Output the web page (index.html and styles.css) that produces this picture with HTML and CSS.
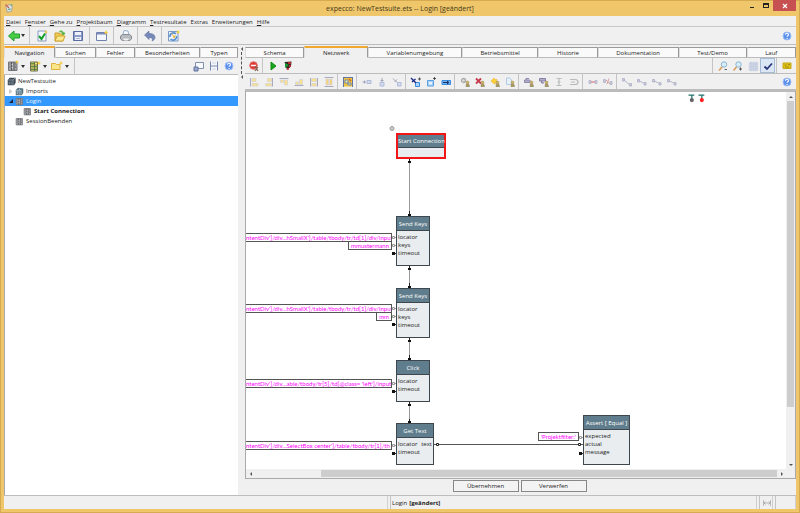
FILE: index.html
```html
<!DOCTYPE html>
<html lang="de">
<head>
<meta charset="utf-8">
<title>expecco: NewTestsuite.ets -- Login [geändert]</title>
<link rel="stylesheet" href="styles.css">
</head>
<body>
<svg class="defs" aria-hidden="true">
  <symbol id="app" viewBox="0 0 12 12"><path d="M2 3l5-1 3 2-1 6-5 1z" fill="#dfe5e4" stroke="#9a9f94"/><path d="M2 2l4 4" stroke="#d05a50" stroke-width="1.5"/><path d="M8 3l2-1M5 8l3-1" stroke="#5aa890" stroke-width="1.5"/></symbol>
  <symbol id="back" viewBox="0 0 12 12"><path d="M0.5 6L6 1v3h5.5v4H6v3z" fill="#45cf45" stroke="#249a2c"/></symbol>
  <symbol id="check" viewBox="0 0 12 12"><path d="M2 1h8v10H2z" fill="#f3f6fb" stroke="#8b9cc0"/><path d="M3 6l2.5 3L9 3.5" fill="none" stroke="#12a028" stroke-width="2"/><path d="M10 0l.6 1.4L12 2l-1.4.6L10 4l-.6-1.4L8 2l1.400-.6z" fill="#f5c832"/></symbol>
  <symbol id="open" viewBox="0 0 12 12"><path d="M1 3h4l1 1h3v7H1z" fill="#f0cf58" stroke="#c79c2c"/><path d="M1 11l2-5h8l-2 5z" fill="#fbe88c" stroke="#cfa536"/><path d="M5 2c2-2 4-1 4.500 1M8 3h3l-1.500 2z" fill="#58b648" stroke="#58b648"/></symbol>
  <symbol id="save" viewBox="0 0 12 12"><path d="M1.500 1.500h9v9h-9z" fill="#8b9cc9" stroke="#5b6ca3"/><path d="M3 2h6v3H3zM3 7h6v3H3z" fill="#eef1f8"/><path d="M4 8.500h4" stroke="#aab3cf"/></symbol>
  <symbol id="window" viewBox="0 0 12 12"><path d="M.5 2.500h10v8H.5z" fill="#f4f7fd" stroke="#7381ad"/><path d="M1 3h9v1.500H1z" fill="#7b8cc0"/><path d="M10 0l.8 1.700L12 2.500l-1.300.8L10 5l-.8-1.700L8 2.500l1.300-.8z" fill="#f6ca35"/></symbol>
  <symbol id="print" viewBox="0 0 12 12"><path d="M3 5l1-4.500 4 .5 1 4z" fill="#f4f9ff" stroke="#9bb1cc"/><path d="M.5 6l2-1.500h7l2 1.500v3l-2 1.500h-7l-2-1.500z" fill="#b7babf" stroke="#888b92"/><path d="M3 8.500h6l-1 2H4z" fill="#f0f1f3"/></symbol>
  <symbol id="undo" viewBox="0 0 12 12"><path d="M.5 5L5 1v2.500c4 0 6 1.500 6 4 0 1.500-1 2.500-3 3.500 1-2.500 0-3.500-3-3.500V9.500z" fill="#7689b8" stroke="#5a6ea2" stroke-width=".6"/></symbol>
  <symbol id="refresh" viewBox="0 0 12 12"><path d="M.5 1.500h9.500v9.500H.5z" fill="#eef4fc" stroke="#7a9ac6"/><path d="M2 7a3.500 3.500 0 0 1 6-3M8.500 6a3.500 3.500 0 0 1-6 3" fill="none" stroke="#5a8fd0" stroke-width="1.600"/><path d="M3 2l3 4 2-1-2 4z" fill="#efb73a"/><path d="M10 0l.8 1.500 1.200.5-1.200.8L10 4l-.8-1.200L8 2l1.200-.5z" fill="#f6ca35"/></symbol>
  <symbol id="help" viewBox="0 0 12 12"><circle cx="6" cy="6" r="4" fill="#5d92ec" stroke="#9cbcf3"/><path d="M4.500 4.700c0-2 3-1.800 3 0 0 1-1.500 1-1.500 2.100M6 8v1" fill="none" stroke="#fff" stroke-width="1.100"/></symbol>
  <symbol id="block" viewBox="0 0 12 12"><path d="M1.500 2h8.500v8.500H1.500z" fill="#a4a6aa" stroke="#74777c"/><path d="M4.500 2v8.500M7 2v8.500M2.500 4h1M2.500 7h1M8 4h1M8 7h1" stroke="#55585d"/><path d="M5.200 4v1M5.200 7v1" stroke="#eee"/></symbol>
  <symbol id="blockNew" viewBox="0 0 12 12"><use href="#block"/><path d="M10 0l.7 1.400L12 2l-1.300.7L10 4l-.7-1.300L8 2l1.300-.6z" fill="#f6ca35"/></symbol>
  <symbol id="listNew" viewBox="0 0 12 12"><path d="M1.500 2h7v9h-7z" fill="#efe06c" stroke="#6f7052"/><path d="M2 3.500h3.500M2 6.500h6.500M2 9.500h6.500" stroke="#609542"/><path d="M5.500 2v9M2 5h6.500M2 8h6.500" stroke="#55573f" stroke-width=".7"/><path d="M10 1l.7 1.400L12 3l-1.300.7L10 5l-.7-1.300L8 3l1.300-.6z" fill="#f6ca35"/></symbol>
  <symbol id="folderNew" viewBox="0 0 12 12"><path d="M.5 3.500h4l1 1H9v5H.5z" fill="#fbe58b" stroke="#e0b23f"/><path d="M10 1l.7 1.400L12 3l-1.300.7L10 5l-.7-1.300L8 3l1.300-.6z" fill="#f6ca35"/></symbol>
  <symbol id="detach" viewBox="0 0 12 12"><path d="M2.500 2.500h8v6h-8z" fill="#f8f9fc" stroke="#8290af"/><path d="M1 7h4v4H1z" fill="#9aa8c9" stroke="#61739f"/></symbol>
  <symbol id="split" viewBox="0 0 12 12"><path d="M2.500 1.500h7v9h-7z" fill="#f5f7fb"/><path d="M2.500 1.500v9M9.500 1.500v9M2.500 6h7" stroke="#7788b0"/><path d="M4 3h4M4 9h4" stroke="#ccd3e3"/></symbol>
  <symbol id="suite" viewBox="0 0 12 12"><path d="M3.500 1h8v6.500l-2 3.500H1V4z" fill="#3b4652"/><path d="M1 4h7v7M8 4l3-3M3 6v4M5.500 6v4" fill="none" stroke="#9babb7"/></symbol>
  <symbol id="imports" viewBox="0 0 12 12"><path d="M4 1l7 1v6l-2 3H1V4z" fill="#53707f"/><path d="M1.500 4.500h7M3 5v5M5.500 5v5M8 5v5M6 2v2" stroke="#bdd0da"/></symbol>
  <symbol id="stop" viewBox="0 0 12 12"><circle cx="5.500" cy="5.500" r="3.800" fill="#e13a33" stroke="#d9706b"/><path d="M3 5.500h5" stroke="#fff" stroke-width="1.500"/><path d="M7 6l3 5M10 7L7 11" stroke="#806250" stroke-width="1.200"/></symbol>
  <symbol id="play" viewBox="0 0 12 12"><path d="M4 2v8l5-4z" fill="#19a51c" stroke="#148a17"/></symbol>
  <symbol id="bug" viewBox="0 0 12 12"><path d="M2.500 2l7-.5-.5 5-4 3.500z" fill="#3a2424"/><path d="M3 3v5l4-3z" fill="#169b34"/><path d="M6 3h3M7 6h2M5 9h2" stroke="#dd2e2c" stroke-width="1.700"/></symbol>
  <symbol id="alignL" viewBox="0 0 12 12"><path d="M2.500 2v8.500" stroke="#a9abc0"/><path d="M4 2.500h4v3H4zM4 7.500h6v2.500H4z" fill="#f8e08c" stroke="#d3d2d6" stroke-width=".7"/></symbol>
  <symbol id="alignR" viewBox="0 0 12 12"><path d="M9.500 2v8.500" stroke="#a9abc0"/><path d="M4.500 2.500h4v3h-4zM2.500 7.500h6v2.500h-6z" fill="#f8e08c" stroke="#d3d2d6" stroke-width=".7"/></symbol>
  <symbol id="alignT" viewBox="0 0 12 12"><path d="M1.500 2.500h9" stroke="#a9abc0"/><path d="M2.500 4h3v2.500h-3zM6.500 4h3v5h-3z" fill="#f8e08c" stroke="#d3d2d6" stroke-width=".7"/></symbol>
  <symbol id="alignB" viewBox="0 0 12 12"><path d="M1.500 9.500h9" stroke="#a9abc0"/><path d="M2.500 6h3v2.500h-3zM6.500 3.500h3v5h-3z" fill="#f8e08c" stroke="#d3d2d6" stroke-width=".7"/></symbol>
  <symbol id="sameH" viewBox="0 0 12 12"><path d="M2.500 2v8.500M9.500 2v8.500" stroke="#a9abc0"/><path d="M3.500 2.500h5v3h-5zM3.500 7.500h5v2.500h-5z" fill="#f8e08c" stroke="#d3d2d6" stroke-width=".7"/></symbol>
  <symbol id="sameV" viewBox="0 0 12 12"><path d="M1.500 1.500h9M1.500 10.500h9" stroke="#a9abc0"/><path d="M3 3h2.500v6H3zM6.500 3H9v6H6.500z" fill="#f7d27c" stroke="#d3d2d6" stroke-width=".7"/></symbol>
  <symbol id="auto" viewBox="0 0 12 12"><path d="M1 1.500h10v9H1z" fill="#f0c43c"/><path d="M1.500 1v10M10.500 1v10M1.500 1.500h9" stroke="#64759f"/><path d="M3 4h3v3H3zM6 7h3v2H6z" fill="#faf2a8" stroke="#6e86ae"/><path d="M7 3l2 2" stroke="#d06a28" stroke-width="1.500"/></symbol>
  <symbol id="pinL" viewBox="0 0 12 12"><path d="M6 4.500h4v3H6z" fill="#d4dced" stroke="#aebbd9"/><path d="M1.500 6H5M3.500 4.500v3" stroke="#a0a4b8"/></symbol>
  <symbol id="pinT" viewBox="0 0 12 12"><path d="M4 6.500h4v3.500H4z" fill="#d4dced" stroke="#aebbd9"/><path d="M6 2v4M4.500 4.500h3" stroke="#a0a4b8"/></symbol>
  <symbol id="pinD" viewBox="0 0 12 12"><path d="M6.500 6.500h3.500v3.500H6.500z" fill="#d4dced" stroke="#aebbd9"/><path d="M2 2.500l4 4M3.500 6l2.500-2.500" stroke="#a0a4b8"/></symbol>
  <symbol id="addD" viewBox="0 0 12 12"><path d="M5.500 6.500h4v4h-4z" fill="#acd4fa" stroke="#3a8add"/><path d="M1 2l5 5M2 6l3.500-3" stroke="#202a8a" stroke-width="1.400"/><path d="M8 3h3M9.500 1.500v3" stroke="#333" stroke-width=".8"/></symbol>
  <symbol id="addB" viewBox="0 0 12 12"><path d="M2.500 4.500h6v5.500h-6z" fill="#a5d0f7" stroke="#5a9fe0"/><path d="M4 6h3v2.500H4z" fill="#e5f3ff"/><path d="M8 2.500h3M9.500 1v3" stroke="#333" stroke-width=".8"/></symbol>
  <symbol id="flow" viewBox="0 0 12 12"><path d="M2 4.500h8.500v4H2z" fill="#74b6ef" stroke="#3a8add"/><path d="M3 6.500h5M7 5l2 1.500L7 8" fill="none" stroke="#152f68"/></symbol>
  <symbol id="person" viewBox="0 0 12 12"><circle cx="8.500" cy="6.500" r="1.400" fill="#d2b560" stroke="#a08e58" stroke-width=".6"/><path d="M7 10.500l.4-2.300h2.400l.7 2.300z" fill="#ae9a5c" stroke="#877a52" stroke-width=".6"/></symbol>
  <symbol id="gearP" viewBox="0 0 12 12"><circle cx="4.500" cy="4.500" r="2" fill="#ddd" stroke="#aaa" stroke-width="1.300"/><use href="#person"/></symbol>
  <symbol id="crossP" viewBox="0 0 12 12"><path d="M2 2.500l5 5M7 2.500l-5 5" stroke="#c63a4b" stroke-width="1.800"/><use href="#person"/></symbol>
  <symbol id="boltP" viewBox="0 0 12 12"><path d="M2 5l3-3 1 1.500h2L6 8 4 7z" fill="#ffd23c" stroke="#e5b440" stroke-width=".7"/><use href="#person"/></symbol>
  <symbol id="docP" viewBox="0 0 12 12"><path d="M2.500 2h3.500l1.500 2v4.500h-5z" fill="#e6f1fb" stroke="#b2cbe2"/><use href="#person"/></symbol>
  <symbol id="outP" viewBox="0 0 12 12"><path d="M1.500 4h5.500v2.500H1.500zM3 4V2.500h3" fill="#b3aec9" stroke="#8e89ab"/><use href="#person"/></symbol>
  <symbol id="inP" viewBox="0 0 12 12"><path d="M1.500 2.500h6v2.500h-6zM3.500 5v2H6" fill="#b3aec9" stroke="#857fa6"/><use href="#person"/></symbol>
  <symbol id="ibar" viewBox="0 0 12 12"><path d="M3.500 2.500h5M3.500 9.500h5M6 3v6M4.500 6h3" stroke="#b9bcbc" stroke-width="1.200"/></symbol>
  <symbol id="loop" viewBox="0 0 12 12"><path d="M2 3.500h5q3 0 3 2.500t-3 2.500H2M3 6h4" fill="none" stroke="#b7baba" stroke-width="1.200"/></symbol>
  <symbol id="link" viewBox="0 0 12 12"><path d="M2 4.500h2v3H2zM8 4.500h2v3H8z" fill="#c9cbdc" stroke="#b8bbce"/><path d="M4 6h4" stroke="#dc9292" stroke-width="1.500"/></symbol>
  <symbol id="unlink" viewBox="0 0 12 12"><path d="M1.500 3.500h2v3h-2zM8 5.500h2v3H8z" fill="#c9cbdc" stroke="#b8bbce"/><path d="M4 4l4 4M7 2.500L5 8" stroke="#dba0a0"/></symbol>
  <symbol id="route1" viewBox="0 0 12 12"><path d="M1.500 2.500h2v2.500h-2zM3.500 4.500l5 4M8.500 7.500h2V10h-2z" fill="#c9cbdc" stroke="#b5b7ca"/></symbol>
  <symbol id="route2" viewBox="0 0 12 12"><path d="M1.500 3.500h2v2.500h-2zM3.500 5l4 2M8 6.500h2V9H8z" fill="#c9cbdc" stroke="#b5b7ca"/></symbol>
  <symbol id="zoomOut" viewBox="0 0 12 12"><circle cx="7" cy="4.500" r="2.700" fill="#d8effb" stroke="#86b4cf"/><path d="M5 7l-3 3.500" stroke="#d99a55" stroke-width="1.500"/><path d="M7.500 9.500H10" stroke="#666"/></symbol>
  <symbol id="zoomIn" viewBox="0 0 12 12"><circle cx="6.500" cy="4.500" r="2.700" fill="#d8effb" stroke="#86b4cf"/><path d="M4.500 7l-3 3.500" stroke="#d99a55" stroke-width="1.500"/><path d="M7 9h3M8.500 7.500v3" stroke="#555"/></symbol>
  <symbol id="grid" viewBox="0 0 12 12"><path d="M2 2h9v9H2z" fill="#d3d9e8"/><path d="M1.500 4h10M1.500 6.500h10M1.500 9h10M4 1.500v10M6.500 1.500v10M9 1.500v10" stroke="#c0c8dc" stroke-width=".7"/></symbol>
  <symbol id="tick" viewBox="0 0 12 12"><path d="M2.500 6.500L5 9l5-5.500" fill="none" stroke="#29377c" stroke-width="1.800"/></symbol>
  <symbol id="note" viewBox="0 0 12 12"><path d="M2 3h8v5.500H2z" fill="#e2c216" stroke="#c5a617"/><path d="M3.500 5h2M7 4.500h2M4 7h4" stroke="#9d8911"/></symbol>
  <symbol id="probe" viewBox="0 0 12 12"><path d="M3 2.500h7M7 2.500V7" fill="none" stroke="#1f716c" stroke-width="1.500"/><circle cx="7" cy="8.500" r="2.500" fill="currentColor"/></symbol>
  <symbol id="resize" viewBox="0 0 12 12"><path d="M2.500 3v6M9.500 3v6M2.500 6h7M4.500 4.500L3 6l1.500 1.500M7.500 4.500L9 6 7.500 7.500" fill="none" stroke="#aaa" stroke-width=".8"/></symbol>
</svg>

<div class="window">
  <header class="titlebar">
    <svg class="icon"><use href="#app"/></svg>
    <h1 class="title">expecco: NewTestsuite.ets -- Login [geändert]</h1>
    <div class="controls">
      <button class="control" aria-label="Minimieren"><span class="min"></span></button>
      <button class="control" aria-label="Maximieren"><span class="max"></span></button>
      <button class="control close" aria-label="Schließen"><svg class="cross" viewBox="0 0 6 6"><path d="M1 1l4 4M5 1L1 5" stroke="#fff" stroke-width="1.200"/></svg></button>
    </div>
  </header>

  <div class="client">
    <nav class="menu">
      <button><u>D</u>atei</button><button>F<u>e</u>nster</button><button><u>G</u>ehe zu</button><button><u>P</u>rojektbaum</button><button><u>D</u>iagramm</button><button><u>T</u>estresultate</button><button>Extras</button><button>Erweiterungen</button><button><u>H</u>ilfe</button>
    </nav>

    <div class="bar main-bar">
      <button class="drop" aria-label="Zurück"><svg class="icon"><use href="#back"/></svg><i class="caret"></i></button>
      <i class="sep"></i>
      <button class="tool" aria-label="Übernehmen"><svg class="icon"><use href="#check"/></svg></button>
      <button class="tool" aria-label="Öffnen"><svg class="icon"><use href="#open"/></svg></button>
      <button class="tool" aria-label="Speichern"><svg class="icon"><use href="#save"/></svg></button>
      <i class="sep"></i>
      <button class="tool" aria-label="Neues Fenster"><svg class="icon"><use href="#window"/></svg></button>
      <i class="sep"></i>
      <button class="tool" aria-label="Drucken"><svg class="icon"><use href="#print"/></svg></button>
      <i class="sep"></i>
      <button class="tool" aria-label="Rückgängig"><svg class="icon"><use href="#undo"/></svg></button>
      <i class="sep"></i>
      <button class="tool" aria-label="Aktualisieren"><svg class="icon"><use href="#refresh"/></svg></button>
      <span class="spacer"></span>
      <button class="tool" aria-label="Hilfe"><svg class="icon"><use href="#help"/></svg></button>
    </div>

    <div class="work">
      <aside class="side">
        <div class="tabs" role="tablist">
          <button class="tab active" role="tab" aria-selected="true">Navigation</button><button class="tab" role="tab">Suchen</button><button class="tab" role="tab">Fehler</button><button class="tab" role="tab">Besonderheiten</button><button class="tab" role="tab">Typen</button>
        </div>
        <div class="bar">
          <button class="drop" aria-label="Neuer Baustein"><svg class="icon"><use href="#blockNew"/></svg><i class="caret"></i></button>
          <button class="drop" aria-label="Neue Liste"><svg class="icon"><use href="#listNew"/></svg><i class="caret"></i></button>
          <button class="drop" aria-label="Neuer Ordner"><svg class="icon"><use href="#folderNew"/></svg><i class="caret"></i></button>
          <i class="sep"></i>
          <span class="spacer"></span>
          <button class="tool" aria-label="Ablösen"><svg class="icon"><use href="#detach"/></svg></button>
          <button class="tool" aria-label="Teilen"><svg class="icon"><use href="#split"/></svg></button>
          <button class="tool" aria-label="Hilfe"><svg class="icon"><use href="#help"/></svg></button>
        </div>
        <ul class="tree">
          <li class="item"><svg class="node-icon"><use href="#suite"/></svg>NewTestsuite</li>
          <li class="item level1"><i class="twist"></i><svg class="node-icon"><use href="#imports"/></svg>Imports</li>
          <li class="item level1 selected"><i class="twist open"></i><svg class="node-icon"><use href="#block"/></svg>Login</li>
          <li class="item level2"><svg class="node-icon"><use href="#block"/></svg><b>Start Connection</b></li>
          <li class="item level1"><i class="twist none"></i><svg class="node-icon"><use href="#block"/></svg>SessionBeenden</li>
        </ul>
      </aside>

      <div class="splitter"><i class="arrow left"></i><i class="grip"></i><i class="arrow left"></i></div>

      <main class="editor">
        <div class="tabs" role="tablist">
          <button class="tab" role="tab">Schema</button><button class="tab active" role="tab" aria-selected="true">Netzwerk</button><button class="tab" role="tab">Variablenumgebung</button><button class="tab" role="tab">Betriebsmittel</button><button class="tab" role="tab">Historie</button><button class="tab" role="tab">Dokumentation</button><button class="tab" role="tab">Test/Demo</button><button class="tab" role="tab">Lauf</button>
        </div>
        <div class="bar">
          <button class="tool" aria-label="Stopp"><svg class="icon"><use href="#stop"/></svg></button>
          <i class="sep"></i>
          <button class="tool" aria-label="Start"><svg class="icon"><use href="#play"/></svg></button>
          <button class="tool" aria-label="Debuggen"><svg class="icon"><use href="#bug"/></svg></button>
          <span class="spacer"></span>
          <i class="sep"></i>
          <button class="tool" aria-label="Verkleinern"><svg class="icon"><use href="#zoomOut"/></svg></button>
          <button class="tool" aria-label="Vergrößern"><svg class="icon"><use href="#zoomIn"/></svg></button>
          <button class="tool" aria-label="Raster"><svg class="icon"><use href="#grid"/></svg></button>
          <button class="tool pressed" aria-label="Am Raster ausrichten" aria-pressed="true"><svg class="icon"><use href="#tick"/></svg></button>
          <i class="sep"></i>
          <button class="tool" aria-label="Notiz"><svg class="icon"><use href="#note"/></svg></button>
        </div>
        <div class="bar">
          <button class="tool" aria-label="Links ausrichten"><svg class="icon"><use href="#alignL"/></svg></button>
          <button class="tool" aria-label="Rechts ausrichten"><svg class="icon"><use href="#alignR"/></svg></button>
          <button class="tool" aria-label="Oben ausrichten"><svg class="icon"><use href="#alignT"/></svg></button>
          <button class="tool" aria-label="Unten ausrichten"><svg class="icon"><use href="#alignB"/></svg></button>
          <button class="tool" aria-label="Gleiche Breite"><svg class="icon"><use href="#sameH"/></svg></button>
          <button class="tool" aria-label="Gleiche Höhe"><svg class="icon"><use href="#sameV"/></svg></button>
          <i class="sep"></i>
          <button class="tool" aria-label="Automatisch anordnen"><svg class="icon"><use href="#auto"/></svg></button>
          <i class="sep"></i>
          <button class="tool" aria-label="Pin links"><svg class="icon"><use href="#pinL"/></svg></button>
          <button class="tool" aria-label="Pin oben"><svg class="icon"><use href="#pinT"/></svg></button>
          <button class="tool" aria-label="Pin diagonal"><svg class="icon"><use href="#pinD"/></svg></button>
          <i class="sep"></i>
          <button class="tool" aria-label="Pin hinzufügen"><svg class="icon"><use href="#addD"/></svg></button>
          <button class="tool" aria-label="Baustein hinzufügen"><svg class="icon"><use href="#addB"/></svg></button>
          <button class="tool" aria-label="Ablauf"><svg class="icon"><use href="#flow"/></svg></button>
          <i class="sep"></i>
          <button class="tool" aria-label="Einstellungen"><svg class="icon"><use href="#gearP"/></svg></button>
          <button class="tool" aria-label="Entfernen"><svg class="icon"><use href="#crossP"/></svg></button>
          <button class="tool" aria-label="Auslösen"><svg class="icon"><use href="#boltP"/></svg></button>
          <button class="tool" aria-label="Dokument"><svg class="icon"><use href="#docP"/></svg></button>
          <i class="sep"></i>
          <button class="tool" aria-label="Ausgang"><svg class="icon"><use href="#outP"/></svg></button>
          <button class="tool" aria-label="Eingang"><svg class="icon"><use href="#inP"/></svg></button>
          <button class="tool" aria-label="Text"><svg class="icon"><use href="#ibar"/></svg></button>
          <button class="tool" aria-label="Schleife"><svg class="icon"><use href="#loop"/></svg></button>
          <i class="sep"></i>
          <button class="tool" aria-label="Verbinden"><svg class="icon"><use href="#link"/></svg></button>
          <button class="tool" aria-label="Trennen"><svg class="icon"><use href="#unlink"/></svg></button>
          <i class="sep"></i>
          <button class="tool" aria-label="Linie 1"><svg class="icon"><use href="#route1"/></svg></button>
          <button class="tool" aria-label="Linie 2"><svg class="icon"><use href="#route2"/></svg></button>
          <button class="tool" aria-label="Linie 3"><svg class="icon"><use href="#route2"/></svg></button>
          <button class="tool" aria-label="Linie 4"><svg class="icon"><use href="#route2"/></svg></button>
          <span class="spacer"></span>
          <button class="tool" aria-label="Hilfe"><svg class="icon"><use href="#help"/></svg></button>
        </div>

        <div class="viewport">
          <div class="canvas">
            <svg class="wires" width="540" height="378">
              <path d="M163.500 67v57M163.500 174v22M163.500 246v22M163.500 310v22" stroke="#999"/>
              <g fill="none" stroke="#222">
                <path d="M163.500 67v4M163.500 119v5M163.500 174v4M163.500 191v5M163.500 246v4M163.500 263v5M163.500 310v4M163.500 327v5"/>
                <path d="M188 352.500h150" stroke="#555"/>
                <path d="M148 161.500h3M148 232.500h3M148 299.500h3M148 361.500h3M335 361.500h3"/>
              </g>
              <g fill="#111">
                <path d="M162 69h3v2h-3zM162 122h3v2h-3zM162 176h3v2h-3zM162 194h3v2h-3zM162 248h3v2h-3zM162 266h3v2h-3zM162 312h3v2h-3zM162 329h3v2h-3z"/>
                <path d="M146 160h3v3h-3zM146 231h3v3h-3zM146 298h3v3h-3zM146 360h3v3h-3zM333 360h3v3h-3z"/>
              </g>
              <g fill="#fff" stroke="#999">
                <path d="M148 145.500h3M148 153.500h3M148 216.500h3M148 224.500h3M148 291.500h3M148 353.500h3M335 345.500h3"/>
                <path d="M146.500 144.500h2v2h-2zM146.500 152.500h2v2h-2zM146.500 215.500h2v2h-2zM146.500 223.500h2v2h-2zM146.500 290.500h2v2h-2zM146.500 352.500h2v2h-2zM333.500 344.500h2v2h-2z"/>
                <path d="M190.500 351.500h2v2h-2zM332.500 351.500h2v2h-2z" stroke="#222"/>
              </g>
              <circle cx="146" cy="36.500" r="2" fill="#ccc" stroke="#999"/>
            </svg>

            <section class="node n-start"><h2>Start Connection</h2></section>
            <section class="node n-keys1"><h2>Send Keys</h2><p>locator</p><p>keys</p><p>timeout</p></section>
            <section class="node n-keys2"><h2>Send Keys</h2><p>locator</p><p>keys</p><p>timeout</p></section>
            <section class="node n-click"><h2>Click</h2><p>locator</p><p>timeout</p></section>
            <section class="node n-text"><h2>Get Text</h2><p><span>locator</span><span>text</span></p><p>timeout</p></section>
            <section class="node n-assert"><h2>Assert [ Equal ]</h2><p>expected</p><p>actual</p><p>message</p></section>

            <span class="value wide v-loc1">ntentDiv']/div...hSmallX']/table/tbody/tr/td[1]/div/input</span>
            <span class="value v-keys1">mmustermann</span>
            <span class="value wide v-loc2">ntentDiv']/div...hSmallX']/table/tbody/tr/td[1]/div/input</span>
            <span class="value v-keys2">mm</span>
            <span class="value wide v-loc3">ntentDiv']/div...able/tbody/tr[5]/td[@class= 'left']/input</span>
            <span class="value wide v-loc4">ntentDiv']/div...SelectBox center']/table/tbody/tr[1]/th</span>
            <span class="value v-filter">'Projektfilter:'</span>

            <div class="probes"><svg class="probe"><use href="#probe"/></svg><svg class="probe hot"><use href="#probe"/></svg></div>
          </div>
          <div class="vscroll"><i class="arrow up"></i><i class="thumb"></i><i class="rest"></i><i class="arrow down"></i></div>
          <div class="hscroll"><i class="arrow left"></i><i class="rest"></i><i class="thumb"></i><i class="arrow right"></i></div>
        </div>

        <div class="actions"><button>Übernehmen</button><button>Verwerfen</button></div>
      </main>
    </div>

    <footer class="status">
      <span class="cell"></span>
      <span class="cell">Login <b>[geändert]</b></span>
      <span class="cell"><svg class="icon"><use href="#resize"/></svg></span>
      <span class="cell"></span>
    </footer>
  </div>
</div>
</body>
</html>
```

FILE: styles.css
```css
* { box-sizing: border-box; }

body {
  margin: 0;
  font: 6px/8px "Open Sans", "Noto Sans", sans-serif;
  color: #222;
}

button {
  margin: 0;
  padding: 0;
  border: 0;
  background: none;
  font: inherit;
  color: inherit;
}

h1, h2, p, ul { margin: 0; padding: 0; font: inherit; }
i { display: block; flex: none; }
svg { display: block; flex: none; }

.defs { position: absolute; width: 0; height: 0; }
.icon { width: 12px; height: 12px; }

.window {
  display: flex;
  flex-direction: column;
  height: 100vh;
  padding: 0 4px 4px;
  background: #efc66a;
  box-shadow: inset 0 0 0 1px #d5aa50;
}

/* Title bar */
.titlebar {
  display: grid;
  grid-template-columns: 1fr auto 1fr;
  height: 16px;
  flex: none;
}
.titlebar .icon { width: 10px; height: 10px; margin-top: 3px; }
.title { font-size: 7px; line-height: 17px; color: #443818; }
.controls { display: flex; justify-content: flex-end; align-items: flex-start; }
.control {
  display: flex;
  justify-content: center;
  align-items: center;
  width: 14px;
  height: 11px;
}
.close { width: 23px; background: #c75050; }
.min { width: 4px; height: 1px; margin-top: 4px; background: #222; }
.max { width: 6px; height: 5px; border: 1px solid #222; border-top-width: 2px; }
.cross { width: 6px; height: 6px; }

.client {
  display: flex;
  flex-direction: column;
  flex: 1;
  min-height: 0;
  background: #f0f0f0;
}

/* Menu */
.menu {
  display: flex;
  gap: 4px;
  height: 11px;
  padding: 2px 2px 0;
  flex: none;
  border-bottom: 1px solid #c9c9c9;
}

/* Toolbars */
.bar {
  display: flex;
  align-items: stretch;
  height: 16px;
  padding: 0 2px 0 1px;
  flex: none;
  border-bottom: 1px solid #bdbdbd;
}
.tool, .drop { display: flex; align-items: center; justify-content: center; }
.tool { width: 15px; }
.drop { width: 22px; justify-content: flex-start; gap: 2px; }
.sep { width: 1px; margin: 0 2px 0 1px; background: #c4c4c4; }
.spacer { flex: 1; }
.caret { border: 2px solid transparent; border-top: 3px solid #333; border-bottom: 0; }
.pressed { background: #dbe7f4; border: 1px solid #a6bbd6; }

.main-bar { height: 18px; padding: 0 0 0 4px; }
.main-bar .tool { width: 18px; }
.main-bar .drop { width: 19px; gap: 1px; }
.main-bar .sep { margin: 0 3px 0 2px; }

/* Work area */
.work {
  display: grid;
  grid-template-columns: 234px 7px 1fr;
  flex: 1;
  min-height: 0;
  padding-top: 1px;
  border-bottom: 1px solid #bdbdbd;
}
.side, .editor { display: flex; flex-direction: column; min-width: 0; min-height: 0; }
.side .bar { height: 17px; padding-left: 3px; }

.tabs { display: flex; height: 12px; flex: none; padding-top: 1px; }
.tab {
  flex: 1 1 auto;
  border: 1px solid #999;
  border-left-color: #ddd;
  border-bottom-color: #bbb;
  background: #fafafa;
}
.tab.active {
  margin-top: -1px;
  border-color: #f0a830 #999 #f0f0f0 #ddd;
  border-top-width: 2px;
  background: #f0f0f0;
}

/* Tree */
.tree {
  flex: 1;
  padding-top: 1px;
  border-left: 1px solid #aaa;
  background: #fff;
  list-style: none;
}
.item { display: flex; align-items: center; gap: 2px; height: 10px; padding-left: 2px; }
.node-icon { width: 9px; height: 9px; }
.level1 { padding-left: 4px; }
.level2 { padding-left: 18px; }
.twist { width: 4px; height: 5px; border-left: 3px solid #ccc; border-top: 2px solid transparent; border-bottom: 2px solid transparent; }
.twist.open { border: 2px solid transparent; border-right-color: #223; border-bottom-color: #223; width: 4px; height: 4px; }
.twist.none { visibility: hidden; }
.selected { background: #3399ff; color: #e6f2ff; }

.splitter { display: flex; flex-direction: column; }
.splitter .arrow { width: 7px; height: 6px; }
.grip { width: 0; height: 22px; margin-left: 3px; border-left: 1px dashed #555; }

/* Diagram viewport */
.viewport {
  display: grid;
  grid-template: 1fr 9px / 1fr 9px;
  flex: 1;
  min-height: 0;
  border: 1px solid #aaa;
  border-top: 2px solid #bbb;
}
.canvas { position: relative; overflow: hidden; background: #fff; }
.wires { position: absolute; left: 0; top: 0; }

.node {
  position: absolute;
  display: flex;
  flex-direction: column;
  border: 1px solid #3d474d;
  background: #e9edf0;
}
.node h2 {
  height: 14px;
  margin-bottom: 2px;
  border-bottom: 1px solid #3d474d;
  background: #5f7d8c;
  color: #fff;
  line-height: 14px;
  text-align: center;
  white-space: nowrap;
}
.node p { display: flex; justify-content: space-between; padding: 0 1px; }
.n-start { left: 150px; top: 41px; width: 50px; height: 26px; border: 2px solid #f21616; }
.n-start h2 { height: 13px; line-height: 12px; }
.n-keys1 { left: 150px; top: 124px; width: 34px; height: 50px; }
.n-keys2 { left: 150px; top: 196px; width: 34px; height: 50px; }
.n-click { left: 150px; top: 268px; width: 34px; height: 42px; }
.n-text { left: 150px; top: 331px; width: 38px; height: 42px; }
.n-assert { left: 337px; top: 323px; width: 47px; height: 50px; }

.value {
  position: absolute;
  height: 9px;
  padding: 0 2px;
  border: 1px solid #555;
  background: #fff;
  color: #f0f;
  font-family: Lato, "Open Sans", sans-serif;
  line-height: 7px;
  white-space: nowrap;
}
.wide { left: 0; width: 146px; padding: 0; border-left: 0; overflow: hidden; }
.v-loc1 { top: 141px; }
.v-keys1 { top: 149px; right: calc(100% - 146px); }
.v-loc2 { top: 212px; }
.v-keys2 { top: 220px; right: calc(100% - 146px); }
.v-loc3 { top: 287px; }
.v-loc4 { top: 349px; }
.v-filter { top: 340px; right: calc(100% - 333px); }

.probes { position: absolute; top: 1px; right: 80px; display: flex; }
.probe { width: 10px; height: 10px; color: #666; }
.hot { color: #f22; }

/* Scrollbars */
.vscroll, .hscroll { display: flex; background: #f0f0f0; }
.vscroll { flex-direction: column; grid-row: 1; grid-column: 2; }
.hscroll { grid-row: 2; grid-column: 1 / 3; padding-right: 9px; }
.thumb { background: #cdcdcd; }
.vscroll .thumb { flex: 307; margin: 0 1px; }
.vscroll .rest { flex: 53; }
.hscroll .thumb { flex: 455; margin: 1px 0; }
.hscroll .rest { flex: 66; }
.arrow { display: flex; align-items: center; justify-content: center; width: 9px; height: 9px; }
.arrow::before { content: ""; border: 2px solid transparent; }
.up::before { border-top: 0; border-bottom-color: #555; }
.down::before { border-bottom: 0; border-top-color: #555; }
.left::before { border-left: 0; border-right-color: #555; }
.right::before { border-right: 0; border-left-color: #555; }

/* Buttons under the diagram */
.actions { display: flex; justify-content: center; gap: 2px; height: 16px; padding: 1px 2px 2px 0; flex: none; }
.actions button { width: 66px; height: 12px; border: 1px solid #888; background: #f3f3f3; }

/* Status bar */
.status {
  display: grid;
  grid-template-columns: 384px 1fr 14px 21px;
  gap: 2px;
  height: 13px;
  flex: none;
}
.cell {
  display: flex;
  align-items: center;
  gap: 2px;
  padding-left: 1px;
  border-right: 1px solid #d0d0d0;
}
.cell + .cell { border-left: 1px solid #c4c4c4; }
```
